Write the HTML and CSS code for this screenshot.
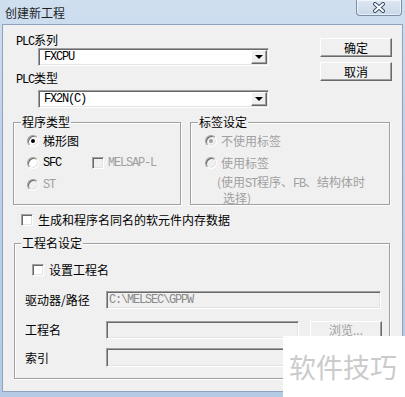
FILE: index.html
```html
<!DOCTYPE html>
<html>
	<head>
		<meta charset="UTF-8">
		<title>创建新工程</title>
		<link rel="stylesheet" href="styles.css">
	</head>
	<body>
		<div class="window">
			<div class="titlebar">
				<span class="title">创建新工程</span>
				<div class="close">
					<svg width="12" height="11" viewBox="0 0 12 11">
						<path d="M2 2 L10 9 M10 2 L2 9" stroke="#3d4f69" stroke-width="4" stroke-linecap="round"/>
						<path d="M2 2 L10 9 M10 2 L2 9" stroke="#fff" stroke-width="2" stroke-linecap="round"/>
					</svg>
				</div>
			</div>
			<div class="client">
				<div class="top">
					<div class="plc">
						<div class="lbl"><span class="en">PLC</span>系列</div>
						<div class="combo"><span class="en">FXCPU</span><i class="drop"></i></div>
						<div class="lbl lbl2"><span class="en">PLC</span>类型</div>
						<div class="combo combo2"><span class="en">FX2N(C)</span><i class="drop"></i></div>
					</div>
					<div class="btns">
						<div class="btn">确定</div>
						<div class="btn">取消</div>
					</div>
				</div>

				<div class="groups">
					<fieldset class="grp grp-type">
						<legend>程序类型</legend>
						<div class="opts">
							<div class="opt"><span class="radio on"></span>梯形图</div>
							<div class="opt">
								<span class="opt-sfc"><span class="radio"></span><span class="en">SFC</span></span>
								<span class="check off"></span><span class="en dim">MELSAP-L</span>
							</div>
							<div class="opt dim"><span class="radio off"></span><span class="en">ST</span></div>
						</div>
					</fieldset>
					<fieldset class="grp grp-tag">
						<legend>标签设定</legend>
						<div class="opts opts-tag dim">
							<div class="opt"><span class="radio off on"></span>不使用标签</div>
							<div class="opt"><span class="radio off"></span>使用标签</div>
							<div class="note">
								<div>(使用<span class="en">ST</span>程序、<span class="en">FB</span>、结构体时</div>
								<div class="note2">选择)</div>
							</div>
						</div>
					</fieldset>
				</div>

				<div class="chkrow">
					<span class="check"></span>生成和程序名同名的软元件内存数据
				</div>

				<fieldset class="grp grp-name">
					<legend>工程名设定</legend>
					<div class="setrow"><span class="check"></span>设置工程名</div>
					<div class="frow frow-path">
						<span class="flbl">驱动器/路径</span>
						<div class="field field-path"><span class="en">C:\MELSEC\GPPW</span></div>
					</div>
					<div class="frow frow-name">
						<span class="flbl">工程名</span>
						<div class="field"></div>
						<div class="btn btn-browse">浏览...</div>
					</div>
					<div class="frow frow-idx">
						<span class="flbl">索引</span>
						<div class="field"></div>
					</div>
				</fieldset>
			</div>

			<div class="mark">软件技巧</div>
		</div>
	</body>
</html>
```

FILE: styles.css
```css
* {
	margin: 0;
	padding: 0;
	box-sizing: border-box;
}

body {
	width: 405px;
	height: 397px;
	overflow: hidden;
	font: 12px/14px "Noto Sans CJK SC", sans-serif;
	color: #000;
}

.en {
	font-family: "Liberation Mono", monospace;
	font-size: 12px;
	letter-spacing: -1.2px;
}

.dim {
	color: #a0a0a0;
}

/* window frame */
.window {
	position: relative;
	width: 405px;
	height: 397px;
	padding: 0 3px 6px;
	background: linear-gradient(to bottom, #cfdff0, #bfd3ea 30%, #b4cbe5);
}

.titlebar {
	position: relative;
	height: 25px;
	display: flex;
	align-items: center;
}
.title {
	padding-left: 2px;
	font-size: 12px;
	color: #1e1e1e;
}
.close {
	position: absolute;
	top: 0;
	right: 0;
	width: 46px;
	height: 16px;
	display: flex;
	align-items: center;
	justify-content: center;
	border: 1px solid #7b8ea8;
	border-top: none;
	border-radius: 0 0 4px 4px;
	background: linear-gradient(to bottom, #dfe8f2, #c8d7e8);
	box-shadow: inset 0 0 0 1px rgba(255,255,255,0.6);
}

.client {
	height: 366px;
	background: #f0f0f0;
	box-shadow: 0 0 0 1px #8ea2bb;
}

/* 3d borders */
.combo, .field, .check, .radio {
	border: 1px solid;
	border-color: #a0a0a0 #fff #fff #a0a0a0;
	box-shadow: inset 1px 1px 0 #696969, inset -1px -1px 0 #e3e3e3;
}
.btn, .drop {
	border: 1px solid;
	border-color: #fff #696969 #696969 #fff;
	box-shadow: inset -1px -1px 0 #a0a0a0;
	background: #f0f0f0;
}

/* top area */
.top {
	display: flex;
	justify-content: space-between;
	padding: 8px 10px 0 13px;
}
.lbl {
	height: 14px;
}
.lbl2 {
	margin-top: 5px;
}
.combo {
	margin: 1px 0 0 22px;
	width: 231px;
	height: 18px;
	background: #fff;
	display: flex;
	align-items: center;
	padding-left: 5px;
}
.combo2 {
	margin-top: 5px;
}
.drop {
	margin-left: auto;
	margin-right: 1px;
	width: 16px;
	height: 14px;
	display: flex;
	align-items: center;
	justify-content: center;
}
.drop::after {
	content: "";
	border-style: solid;
	border-width: 4px 4px 0;
	border-color: #000 transparent transparent;
}

.btns {
	margin-top: 5px;
	display: flex;
	flex-direction: column;
	gap: 5px;
}
.btn {
	width: 72px;
	height: 19px;
	display: flex;
	align-items: center;
	justify-content: center;
}

/* group boxes */
.groups {
	display: flex;
	gap: 9px;
	padding-left: 10px;
	margin-top: 7px;
}
.grp {
	min-width: 0;
	height: 90px;
	border: 1px solid #a0a0a0;
	box-shadow: inset 1px 1px 0 #fff, 1px 1px 0 #fff;
}
.grp legend {
	margin-left: 7px;
	padding: 0 1px;
	line-height: 14px;
	background: #f0f0f0;
}
.grp-type {
	width: 168px;
}
.grp-tag {
	width: 200px;
}

.opts {
	padding: 1px 0 0 13px;
	display: flex;
	flex-direction: column;
	gap: 1px;
}
.opts-tag {
	padding-left: 14px;
}
.opt {
	height: 21px;
	display: flex;
	align-items: center;
}
.opt-sfc {
	width: 65px;
	display: flex;
	align-items: center;
}

.radio {
	width: 12px;
	height: 12px;
	margin-right: 4px;
	border-radius: 50%;
	background: #fff;
	display: flex;
	align-items: center;
	justify-content: center;
}
.radio.on::after {
	content: "";
	width: 4px;
	height: 4px;
	border-radius: 50%;
	background: #000;
}
.radio.off {
	background: #f0f0f0;
}
.radio.off.on::after {
	background: #a0a0a0;
}

.check {
	width: 12px;
	height: 12px;
	margin-right: 4px;
	background: #fff;
}
.check.off {
	background: #f0f0f0;
}

.note {
	margin-top: 1px;
	padding-left: 12px;
	line-height: 13px;
}
.note2 {
	padding-left: 6px;
}

.chkrow {
	height: 14px;
	margin: 8px 0 0 18px;
	display: flex;
	align-items: center;
}
.chkrow .check {
	margin-right: 5px;
}

/* project name group */
.grp-name {
	margin: 9px 0 0 11px;
	width: 376px;
	height: 143px;
}
.grp-name legend {
	margin-left: 6px;
}
.setrow {
	height: 14px;
	margin-top: 13px;
	padding-left: 17px;
	display: flex;
	align-items: center;
}
.setrow .check {
	margin-right: 5px;
}

.frow {
	display: flex;
	align-items: center;
	padding-left: 10px;
}
.frow-path {
	margin-top: 14px;
}
.frow-name {
	margin-top: 12px;
}
.frow-idx {
	margin-top: 9px;
}
.flbl {
	width: 81px;
}
.field {
	width: 193px;
	height: 18px;
	background: #f0f0f0;
	display: flex;
	align-items: center;
	padding-left: 2px;
	color: #8a8a8a;
}
.field-path {
	width: 275px;
}
.frow-idx .field {
	height: 19px;
}
.btn-browse {
	margin-left: 11px;
	height: 18px;
	color: #a0a0a0;
}

/* watermark */
.mark {
	position: absolute;
	left: 283px;
	top: 336px;
	width: 122px;
	height: 61px;
	padding-left: 6px;
	background: #fff;
	font-size: 27px;
	line-height: 61px;
	color: #cbcbcb;
}
```
